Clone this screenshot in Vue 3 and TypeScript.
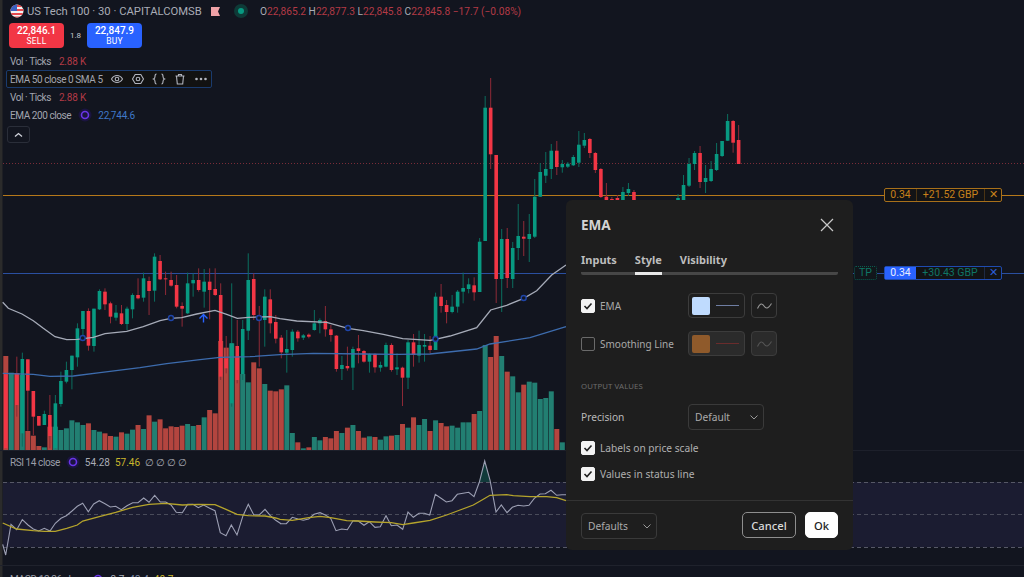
<script setup lang="ts">
type C = [string, number, number, number, number]
const xOf = (i: number) => 5.8 + 5.51 * i
// values in zoom-space: real y = 260 + z / 3
const zc: C[] = [
  ['r',340,340,565,565],['g',340,340,340,340],['r',290,340,435,470],['g',278,297,520,560],['r',298,298,392,512],['r',393,393,470,525],['r',468,468,497,497],['g',452,462,495,495],['r',405,465,528,565],['g',405,430,565,565],
  ['g',335,363,432,440],['g',305,330,365,370],['g',287,287,330,388],['g',190,205,292,320],['g',153,153,207,240],['r',145,153,257,272],['g',146,146,258,275],['g',88,93,148,150],['r',85,95,133,150],['r',125,130,170,190],
  ['g',135,158,173,182],['r',135,160,192,195],['g',140,146,192,210],['g',100,105,148,175],['r',55,105,115,118],['g',38,55,113,125],['r',50,63,93,165],['g',-20,-10,92,125],['r',-15,3,58,60],['r',35,55,58,105],
  ['r',35,60,77,80],['r',45,75,140,145],['r',127,138,146,200],['g',38,70,160,162],['g',40,60,70,110],['r',25,60,90,95],['g',27,65,95,143],['r',25,65,90,178],['r',25,87,105,108],['r',70,105,350,360],
  ['r',228,295,325,340],['g',70,250,430,440],['r',180,258,360,370],['g',180,207,342,360],['g',-20,60,212,240],['r',40,57,165,180],['r',138,165,170,320],['g',88,110,180,260],['r',88,118,190,220],['r',165,186,236,250],
  ['r',225,233,277,295],['g',210,267,278,338],['g',208,215,270,290],['r',210,215,235,245],['g',222,226,233,240],['r',220,224,230,235],['g',150,190,210,212],['g',175,180,190,220],['r',138,183,208,230],['r',195,208,225,245],
  ['r',225,227,327,335],['g',288,315,327,360],['r',260,318,325,332],['g',260,267,323,390],['r',225,265,273,310],['r',270,273,305,308],['g',280,282,305,338],['r',280,282,322,338],['g',305,315,323,335],['g',248,255,320,322],
  ['r',250,255,330,335],['g',280,322,328,345],['r',320,323,353,438],['g',240,247,353,387],['r',222,247,285,320],['g',212,255,287,308],['g',222,255,260,305],['r',228,257,270,280],['g',98,110,270,270],['r',72,110,138,158],
  ['r',120,135,156,190],['g',105,140,156,160],['g',90,95,140,158],['g',38,84,95,130],['g',55,73,87,100],['r',52,76,97,122],
]
// values in real pixels, index 86 onward
const rc: C[] = [
  ['g',238,241.7,292,292],['g',96,107.7,241,241],['r',78,107.7,154.3,169],['r',155,155,279,303],['g',229,239,279,312],['r',228,239,278,288],['g',242,248,279,288],['g',204,236,248,260],['r',221,236.7,238.7,256],['g',214,234,239,262],
  ['g',179,196.7,236.7,238],['g',163,172,196.7,197],['g',152,169,175.7,183],['g',144,150.7,169,179],['r',141,150.7,167,175],['g',160,164,167.3,172.7],['g',162,163.7,166.7,168],['g',155,157,165.3,166],['g',131,144.7,162.7,167],['g',133,140,145.7,148],
  ['r',138,139,153,158],['r',152,153,170,173],['r',168,169,197,198],['r',183,196.7,205,205],['r',197,199,205,205],['r',195,198,205,205],['g',187,192,205,205],['g',183,189,193,196],['r',190,192,205,205],
  ['g',205,205,205,205],['g',205,205,205,205],['g',205,205,205,205],['g',205,205,205,205],['g',205,205,205,205],['g',205,205,205,205],['g',205,205,205,205],
  ['g',194,198,205,205],['g',175,185,205,205],['g',158,164,185.7,187],['g',151,153,164,170],['r',146,153,182,188],['g',165,178,182,193],['g',161,169,181,182],['g',143,154,170,171],['g',143,141,156,157],['g',114,121,140.7,141],['r',120,121,142.7,152.7],['r',125,140,164,164],
]
const toReal = (z: number) => 260 + z / 3
const candles = [
  ...zc.map((c, i) => ({ i, g: c[0] === 'g', h: toReal(c[1]), t: toReal(c[2]), b: toReal(c[3]), l: toReal(c[4]) })),
  ...rc.map((c, k) => ({ i: zc.length + k, g: c[0] === 'g', h: c[1], t: c[2], b: c[3], l: c[4] })),
].filter((c) => c.b - c.t > 0.1).map((c) => ({ ...c, x: xOf(c.i) }))

const volSrc = 'r288 g338 r340 g345 r513 r527 r558 g562 r500 g500 g510 g505 g481 g487 g495 r490 g510 g515 r520 r528 g530 r517 g521 g509 r495 g507 r466 g485 r478 r505 r499 r501 r497 g492 g498 r495 g472 r450 r460 r243 r263 g250 r290 g342 g367 r307 r325 g372 r392 r394 r388 g376 g519 r547 g565 r562 g531 g541 r531 r535 r513 g519 r503 g495 r513 r533 g529 r531 g539 g529 r527 g525 r492 g503 r472 g495 g477 r513 g481 r489 r499 g497 g503 g487 g487 r462 g453 g255 r291 r228 g288 r335 g349 g397 r374 g365 g368 g417 g414 g394 r507 g547'
const volumes = volSrc.split(' ').map((s, i) => ({
  x: xOf(i) - 2.5,
  y: toReal(Number(s.slice(1))),
  h: 450 - toReal(Number(s.slice(1))),
  g: s[0] === 'g',
}))

const poly = (a: number[], ox: number, oy: number) => {
  const out: string[] = []
  for (let i = 0; i < a.length; i += 2) out.push(`${(ox + a[i] / 3).toFixed(1)},${(oy + a[i + 1] / 3).toFixed(1)}`)
  return out
}
const emaWhite = [...poly([8,127,25,145,66,162,100,182,130,205,165,230,200,239,232,238,280,232,315,221,380,214,430,200,480,182,512,175,545,173,590,162,645,151,680,163,712,175,745,172,810,170,840,176], 0, 260), ...poly([0,176,50,183,140,187,204,205,250,212,310,223,368,236,450,241,466,238,510,228,590,203,632,150,680,136,731,115,770,92,815,45,858,15], 280, 260)].join(' ')
const emaBlue = [...poly([8,340,100,343,150,349,220,348,300,338,420,323,500,311,600,299,660,292,750,290,840,284], 0, 260), ...poly([0,284,100,280,250,282,350,283,450,282,590,267,630,252,750,233,858,200], 280, 260)].join(' ')
const rsiWhite = [...poly([8,298,17,330,33,238,50,254,67,224,84,240,100,252,116,258,133,250,150,258,166,235,183,220,199,212,216,198,232,184,248,175,265,200,281,177,298,167,315,176,331,186,347,184,364,194,381,182,398,173,414,173,431,159,447,172,464,151,481,171,497,171,513,180,529,202,547,203,563,178,579,178,595,188,611,180,629,190,645,197,661,263,678,272,694,240,711,270,729,212,745,178,761,209,778,210,795,193,811,212,827,226,843,236], 0, 445), ...poly([0,236,19,236,37,217,54,222,70,226,86,222,102,208,120,203,136,210,152,220,168,257,185,252,202,254,219,227,235,228,252,241,268,230,285,247,301,245,318,212,334,242,351,240,368,253,384,201,400,217,417,205,433,205,449,210,466,148,483,160,499,171,516,167,532,148,549,145,566,142,582,155,598,112,614,48,630,105,648,201,664,180,681,203,697,187,714,181,731,183,747,181,763,160,780,147,796,146,813,136,830,151,846,149,858,149], 280, 445)].join(' ')
const rsiYellow = [...poly([8,234,50,252,100,257,133,259,166,259,200,250,232,240,248,228,298,215,347,202,398,187,447,178,497,175,547,180,595,178,645,179,678,193,711,208,745,212,795,213,827,219], 0, 445), ...poly([0,223,37,226,86,218,120,214,152,218,200,227,235,228,285,231,334,233,368,239,400,234,450,226,500,210,540,195,580,180,610,163,630,151,680,149,700,152,750,155,800,155,830,158,858,167], 280, 445)].join(' ')
const markers = [[82.7,338],[171,318],[259,318],[348,328],[435.5,339],[523.7,298]]
const statusValues = ['∅', '∅', '∅', '∅']
</script>

<template>
  <div class="stage">
    <svg class="chart" width="1024" height="577" viewBox="0 0 1024 577">
      <rect x="0" y="0" width="2.5" height="577" fill="#2b2b2b" />
      <line x1="3" y1="163.5" x2="1024" y2="163.5" stroke="#7a2c38" stroke-dasharray="1 2" />
      <rect x="3" y="195" width="1021" height="1" fill="#b5781a" />
      <rect x="3" y="273" width="1021" height="1" fill="#2a4fa0" />
      <g>
        <rect v-for="v in volumes" :key="'v' + v.x" :x="v.x" :y="v.y" width="5" :height="v.h" :fill="v.g ? '#227f72' : '#b3453f'" />
      </g>
      <g v-for="c in candles" :key="c.i">
        <line :x1="c.x" :x2="c.x" :y1="c.h" :y2="c.l" :stroke="c.g ? '#0b6e5f' : '#8f2a37'" stroke-width="1" />
        <rect :x="c.x - 1.8" :y="c.t" width="3.6" :height="c.b - c.t" :fill="c.g ? '#089981' : '#f23645'" />
      </g>
      <polyline :points="emaBlue" fill="none" stroke="#3d6cae" stroke-width="1.3" />
      <polyline :points="emaWhite" fill="none" stroke="#a6abb8" stroke-width="1.3" />
      <circle v-for="m in markers" :key="m[0]" :cx="m[0]" :cy="m[1]" r="2.5" fill="#131722" stroke="#1f45a8" stroke-width="1.4" />
      <path d="M203.5 322.5V314.5M199.5 318.5L203.5 314.5L207.5 318.5" fill="none" stroke="#2962ff" stroke-width="1.4" />
      <line x1="0" y1="450.5" x2="1024" y2="450.5" stroke="#1d202b" />
      <rect x="3" y="482" width="1021" height="65" fill="#1b1c31" />
      <line x1="3" y1="482.5" x2="1024" y2="482.5" stroke="#565866" stroke-dasharray="4 3" />
      <line x1="3" y1="514.5" x2="1024" y2="514.5" stroke="#494b5a" stroke-dasharray="4 3" />
      <line x1="3" y1="547.5" x2="1024" y2="547.5" stroke="#565866" stroke-dasharray="4 3" />
      <polygon points="479,482 484.7,461 490,482" fill="#113a3a" />
      <polyline :points="rsiWhite" fill="none" stroke="#9c9fb3" stroke-width="1.1" />
      <polyline :points="rsiYellow" fill="none" stroke="#b5a42c" stroke-width="1.3" />
      <line x1="0" y1="565.5" x2="1024" y2="565.5" stroke="#1f222c" />
    </svg>

    <div class="legend">
      <div class="row-title">
        <svg class="flag" width="14" height="14" viewBox="0 0 14 14">
          <defs><clipPath id="flagclip"><circle cx="7" cy="7" r="6.5" /></clipPath></defs>
          <g clip-path="url(#flagclip)">
            <rect width="14" height="14" fill="#f2f2f2" />
            <rect y="1" width="14" height="2" fill="#e5484d" /><rect y="5" width="14" height="2" fill="#e5484d" /><rect y="9" width="14" height="2" fill="#e5484d" /><rect y="12.5" width="14" height="2" fill="#e5484d" />
            <rect width="7" height="7" fill="#3b5fc0" />
          </g>
        </svg>
        <span class="symbol">US Tech 100 · 30 · CAPITALCOMSB</span>
        <svg class="tag" width="9" height="9" viewBox="0 0 9 9"><path d="M0 0H9L7 4.5L9 9H0Z" fill="#f0a3a8" /></svg>
        <span class="live"><i /></span>
        <span class="ohlc"><b>O</b>22,865.2 <b>H</b>22,877.3 <b>L</b>22,845.8 <b>C</b>22,845.8 −17.7 (−0.08%)</span>
      </div>
      <div class="trade">
        <div class="tbtn sell"><strong>22,846.1</strong><span>SELL</span></div>
        <span class="spread">1.8</span>
        <div class="tbtn buy"><strong>22,847.9</strong><span>BUY</span></div>
      </div>
      <div class="study">Vol · Ticks <em class="red">2.88 K</em></div>
      <div class="study selected">
        <span>EMA 50 close 0 SMA 5</span>
        <svg width="14" height="14" viewBox="0 0 14 14" fill="none" stroke="#b2b5be" stroke-width="1.1"><path d="M1.5 7C3 4.5 5 3.5 7 3.5S11 4.5 12.5 7C11 9.5 9 10.5 7 10.5S3 9.5 1.5 7Z" /><circle cx="7" cy="7" r="1.8" /></svg>
        <svg width="14" height="14" viewBox="0 0 14 14" fill="none" stroke="#b2b5be" stroke-width="1.1"><path d="M4.2 2.5H9.8L12.5 7L9.8 11.5H4.2L1.5 7Z" /><circle cx="7" cy="7" r="1.8" /></svg>
        <svg width="14" height="14" viewBox="0 0 14 14" fill="none" stroke="#b2b5be" stroke-width="1.1"><path d="M4.5 2C3 2 3 3 3 4.5S3 6.5 1.5 7C3 7.5 3 8 3 9.5S3 12 4.5 12M9.5 2C11 2 11 3 11 4.5S11 6.5 12.5 7C11 7.5 11 8 11 9.5S11 12 9.5 12" /></svg>
        <svg width="14" height="14" viewBox="0 0 14 14" fill="none" stroke="#b2b5be" stroke-width="1.1"><path d="M2.5 4H11.5M5.5 4V2.5H8.5V4M3.5 4L4.3 12H9.7L10.5 4" /></svg>
        <svg width="14" height="14" viewBox="0 0 14 14" fill="#b2b5be"><circle cx="2.5" cy="7" r="1.3" /><circle cx="7" cy="7" r="1.3" /><circle cx="11.5" cy="7" r="1.3" /></svg>
      </div>
      <div class="study">Vol · Ticks <em class="red">2.88 K</em></div>
      <div class="study">
        EMA 200 close
        <svg class="ring" width="14" height="14" viewBox="0 0 14 14" fill="none"><circle cx="7" cy="7" r="6.5" fill="#1b1440" /><circle cx="7" cy="7" r="3.5" stroke="#6a35e8" stroke-width="1.6" /></svg>
        <em class="blue">22,744.6</em>
      </div>
      <div class="collapse">
        <svg width="9" height="6" viewBox="0 0 9 6" fill="none" stroke="#d1d4dc" stroke-width="1.3"><path d="M1 4.5L4.5 1.5L8 4.5" /></svg>
      </div>
    </div>

    <div class="order orange-order">
      <span class="qty">0.34</span><span class="pnl">+21.52 GBP</span><span class="cls">✕</span>
    </div>
    <div class="tp">TP</div>
    <div class="order blue-order">
      <span class="qty">0.34</span><span class="pnl">+30.43 GBP</span><span class="cls">✕</span>
    </div>

    <div class="pane-legend rsi">
      <span class="pl-name">RSI 14 close</span>
      <svg class="pl-ring" width="14" height="14" viewBox="0 0 14 14" fill="none"><circle cx="7" cy="7" r="6.5" fill="#1b1440" /><circle cx="7" cy="7" r="3.5" stroke="#6a35e8" stroke-width="1.6" /></svg>
      <span class="v-w">54.28</span><span class="v-y">57.46</span>
      <span v-for="(s, i) in statusValues" :key="i" class="v-w v-na">{{ s }}</span>
    </div>
    <div class="pane-legend macd">
      <span class="pl-name">MACD 12 26 close</span>
      <svg class="pl-ring" width="14" height="14" viewBox="0 0 14 14" fill="none"><circle cx="7" cy="7" r="3.5" stroke="#6a35e8" stroke-width="1.6" /></svg>
      <span class="v-w">2.7</span><span class="v-b">43.4</span><span class="v-y">40.7</span>
    </div>

    <section class="modal">
      <header class="m-head">
        <h2>EMA</h2>
        <svg width="14" height="14" viewBox="0 0 14 14" fill="none" stroke="#c9c9c9" stroke-width="1.2"><path d="M1 1L13 13M13 1L1 13" /></svg>
      </header>
      <nav class="tabs">
        <span>Inputs</span><span class="active">Style</span><span>Visibility</span>
      </nav>
      <div class="m-row first">
        <span class="cb on"><svg width="10" height="8" viewBox="0 0 10 8" fill="none" stroke="#1e1e1e" stroke-width="1.6"><path d="M1.5 4L4 6.5L8.5 1.5" /></svg></span>
        <label class="lbl-w">EMA</label>
        <div class="color"><i class="sw light" /><i class="ln l1" /></div>
        <div class="wave"><svg width="15" height="8" viewBox="0 0 15 8" fill="none" stroke="#9a9a9a" stroke-width="1.1"><path d="M0.5 6.5C3 1 5 1 7 4S11 7 14.5 1.5" /></svg></div>
      </div>
      <div class="m-row second">
        <span class="cb"></span>
        <label class="lbl-w">Smoothing Line</label>
        <div class="color off"><i class="sw brown" /><i class="ln l2" /></div>
        <div class="wave off"><svg width="15" height="8" viewBox="0 0 15 8" fill="none" stroke="#555" stroke-width="1.1"><path d="M0.5 6.5C3 1 5 1 7 4S11 7 14.5 1.5" /></svg></div>
      </div>
      <div class="caption">OUTPUT VALUES</div>
      <div class="m-row precision">
        <label class="lbl-p">Precision</label>
        <div class="select wide"><span>Default</span><svg width="8" height="5" viewBox="0 0 8 5" fill="none" stroke="#999"><path d="M0.5 0.5L4 4L7.5 0.5" /></svg></div>
      </div>
      <div class="m-row chk c1">
        <span class="cb on"><svg width="10" height="8" viewBox="0 0 10 8" fill="none" stroke="#1e1e1e" stroke-width="1.6"><path d="M1.5 4L4 6.5L8.5 1.5" /></svg></span>
        <label class="lbl-b">Labels on price scale</label>
      </div>
      <div class="m-row chk c2">
        <span class="cb on"><svg width="10" height="8" viewBox="0 0 10 8" fill="none" stroke="#1e1e1e" stroke-width="1.6"><path d="M1.5 4L4 6.5L8.5 1.5" /></svg></span>
        <label class="lbl-b">Values in status line</label>
      </div>
      <footer class="m-foot">
        <div class="select wide"><span>Defaults</span><svg width="8" height="5" viewBox="0 0 8 5" fill="none" stroke="#999"><path d="M0.5 0.5L4 4L7.5 0.5" /></svg></div>
        <div class="actions">
          <button class="cancel">Cancel</button>
          <button class="ok">Ok</button>
        </div>
      </footer>
    </section>
  </div>
</template>

<style scoped>
.stage {
  position: relative;
  width: 1024px;
  height: 577px;
  overflow: hidden;
  background: #12151f;
  font-family: "Noto Sans", "Open Sans", sans-serif;
  color: #a9acb6;
}
.chart { display: block; }

.legend {
  position: absolute;
  left: 0;
  top: 0;
  display: flex;
  flex-direction: column;
  align-items: flex-start;
  font-family: Roboto, "Noto Sans", sans-serif;
}
.row-title {
  display: flex;
  align-items: center;
  height: 22px;
  padding-left: 10px;
  white-space: nowrap;
}
.flag { margin-right: 3px; }
.symbol { color: #a9acb6; width: 184px; font-size: 11.25px; }
.tag { margin-right: 14px; }
.live {
  width: 14px;
  height: 14px;
  border-radius: 50%;
  background: #0e3a37;
  display: flex;
  align-items: center;
  justify-content: center;
  margin-right: 12px;
}
.live i { width: 6px; height: 6px; border-radius: 50%; background: #089981; }
.ohlc { color: #b23a46; font-size: 10.2px; }
.ohlc b { font-weight: 400; color: #a9acb6; }

.trade { display: flex; align-items: center; margin: 1px 0 0 9px; height: 25px; }
.tbtn {
  width: 55px;
  height: 25px;
  border-radius: 4px;
  color: #fff;
  display: flex;
  flex-direction: column;
  align-items: center;
  justify-content: center;
  line-height: 10px;
}
.tbtn strong { font-size: 10px; font-weight: 500; }
.tbtn span { font-size: 8.5px; letter-spacing: 0.2px; }
.sell { background: #f23645; }
.buy { background: #2962ff; }
.spread { width: 23px; text-align: center; font-size: 8px; color: #c8cad0; }

.study {
  display: flex;
  align-items: center;
  gap: 8px;
  height: 18px;
  margin-left: 10px;
  font-size: 10px;
  letter-spacing: -0.42px;
  white-space: nowrap;
  color: #a2a5af;
}
.trade + .study { margin-top: 4px; }
.study em { font-style: normal; letter-spacing: -0.2px; }
.red { color: #b23a46; }
.blue { color: #3f78c8; }
.study.selected {
  margin-left: 6px;
  padding-left: 3px;
  width: 206px;
  box-sizing: border-box;
  height: 18px;
  gap: 7px;
  border: 1px solid #1a3b6e;
  border-radius: 2px;
  background: #121212;
}
.ring { margin: 0 -2px 0 -1px; }
.collapse {
  width: 23px;
  height: 17px;
  box-sizing: border-box;
  margin: 2px 0 0 7px;
  border: 1px solid #2a2e39;
  border-radius: 3px;
  display: flex;
  align-items: center;
  justify-content: center;
}

.order {
  position: absolute;
  left: 884px;
  width: 118px;
  height: 14px;
  box-sizing: border-box;
  border-radius: 2px;
  display: grid;
  grid-template-columns: 31px 68px 1fr;
  font-family: Roboto, "Noto Sans", sans-serif;
  font-size: 10.5px;
  line-height: 12px;
  text-align: center;
  background: #121315;
}
.orange-order { top: 188px; border: 1px solid #a8701a; color: #c8811b; }
.orange-order .pnl, .orange-order .cls { border-left: 1px solid #4a3413; }
.blue-order { top: 266px; border: 1px solid #1f4bb0; color: #0b6e5f; }
.blue-order .qty { background: #2962ff; color: #e8edff; }
.blue-order .pnl { color: #0f7565; }
.blue-order .cls { color: #2c5dd6; border-left: 1px solid #1e2a44; }
.tp {
  position: absolute;
  left: 854px;
  top: 266px;
  width: 23px;
  height: 14px;
  box-sizing: border-box;
  border: 1px dotted #0c5b50;
  border-radius: 2px;
  background: #11161b;
  color: #0f7565;
  font-family: Roboto, "Noto Sans", sans-serif;
  font-size: 10.5px;
  line-height: 12px;
  text-align: center;
}

.pane-legend {
  position: absolute;
  left: 10px;
  display: flex;
  align-items: center;
  gap: 5px;
  font-family: Roboto, "Noto Sans", sans-serif;
  font-size: 10px;
  color: #9a9da8;
  white-space: nowrap;
}
.pl-name { letter-spacing: -0.42px; margin-right: 1px; }
.v-na { width: 6px; }
.rsi { top: 455px; }
.macd { top: 572px; }
.v-w { color: #a9acb6; }
.v-y { color: #c9b52c; }
.v-b { color: #7e8aa8; }

.modal {
  position: absolute;
  left: 566px;
  top: 200px;
  width: 287px;
  height: 350px;
  box-sizing: border-box;
  background: #1e1e1e;
  border-radius: 6px;
  color: #b9b9b9;
}
.m-head {
  display: flex;
  justify-content: space-between;
  align-items: center;
  height: 50px;
  padding: 0 19px 0 15px;
}
.m-head h2 { margin: 0; font-size: 13.5px; font-weight: 700; color: #d3d3d3; }
.tabs {
  display: flex;
  gap: 18px;
  margin: 0 15px;
  height: 25px;
  box-sizing: border-box;
  font-size: 11px;
  font-weight: 700;
  line-height: 20px;
  color: #bdbdbd;
  border-bottom: 3px solid #474747;
  border-radius: 0 0 2px 2px;
}
.tabs span { height: 25px; }
.tabs .active { border-bottom: 3px solid #e8e8e8; box-sizing: border-box; height: 25px; }
.m-row { display: flex; align-items: center; margin: 0 15px; }
.first { margin-top: 18px; height: 25px; }
.second { margin-top: 13px; height: 25px; }
.cb {
  width: 14px;
  height: 14px;
  box-sizing: border-box;
  border: 1px solid #6a6a6a;
  border-radius: 2px;
  display: flex;
  align-items: center;
  justify-content: center;
  margin-right: 5px;
  flex: none;
}
.cb.on { background: #f2f2f2; border-color: #f2f2f2; }
.lbl-w { width: 88px; font-size: 10px; color: #a9a9a9; white-space: nowrap; }
.color {
  width: 57px;
  height: 25px;
  box-sizing: border-box;
  border: 1px solid #3c3c3c;
  border-radius: 4px;
  display: flex;
  align-items: center;
  padding-left: 3px;
  gap: 6px;
}
.sw { width: 18px; height: 18px; border-radius: 2px; display: block; }
.light { background: #bfdbfe; }
.brown { background: #8f5a2b; }
.ln { width: 23px; height: 1px; display: block; }
.l1 { background: #6f7ea3; }
.l2 { background: #6a2c2c; }
.color.off, .wave.off { background: #2b2b2b; }
.wave {
  width: 26px;
  height: 25px;
  box-sizing: border-box;
  margin-left: 6px;
  border: 1px solid #3c3c3c;
  border-radius: 4px;
  display: flex;
  align-items: center;
  justify-content: center;
}
.caption {
  margin: 23px 15px 0;
  height: 14px;
  font-size: 7.8px;
  line-height: 14px;
  letter-spacing: 0.1px;
  color: #6c6c6c;
}
.precision { margin-top: 11px; height: 26px; }
.lbl-p { width: 107px; font-size: 10.2px; color: #b9b9b9; }
.select {
  height: 26px;
  box-sizing: border-box;
  border: 1px solid #3a3a3a;
  border-radius: 4px;
  display: flex;
  align-items: center;
  justify-content: space-between;
  padding: 0 5px 0 6px;
  font-size: 10.2px;
  color: #ababab;
}
.wide { width: 76px; }
.chk { height: 16px; }
.c1 { margin-top: 10px; }
.c2 { margin-top: 10px; }
.lbl-b { font-size: 10.2px; color: #b0b0b0; white-space: nowrap; }
.m-foot {
  position: absolute;
  left: 0;
  right: 0;
  bottom: 0;
  height: 50px;
  box-sizing: border-box;
  border-top: 1px solid #333;
  padding: 12px 15px 0;
  display: flex;
  justify-content: space-between;
  align-items: flex-start;
}
.actions { display: flex; gap: 9px; margin-top: -1px; }
.cancel, .ok {
  font-family: inherit;
  height: 26px;
  box-sizing: border-box;
  border-radius: 5px;
  font-size: 11.2px;
  font-weight: 500;
  padding: 0;
}
.cancel { width: 54px; background: #1e1e1e; border: 1px solid #8e8e8e; color: #dadada; }
.ok { width: 33px; background: #fff; border: 1px solid #fff; color: #1e1e1e; }
</style>
